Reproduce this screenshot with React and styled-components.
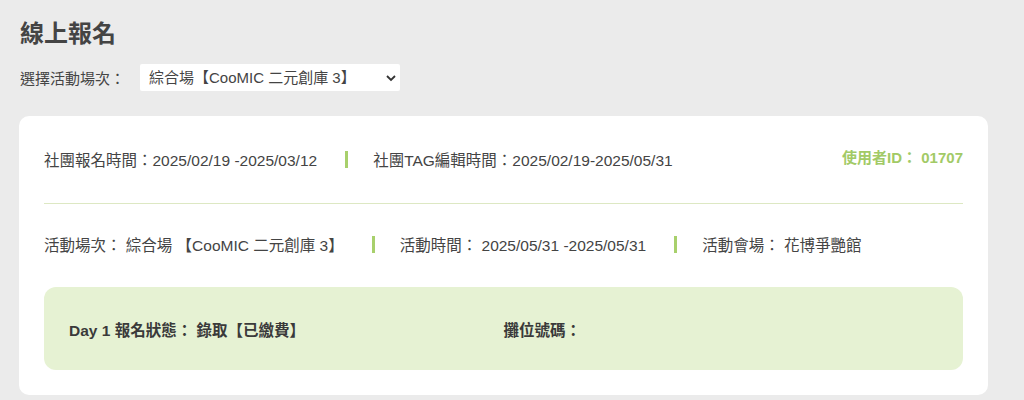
import styled, { createGlobalStyle } from "styled-components";

const GlobalStyle = createGlobalStyle`
  body {
    margin: 0;
    background: #ebebeb;
    font-family: "Liberation Sans", "Noto Sans CJK TC", sans-serif;
    color: #444;
  }
`;

const Page = styled.div`
  padding: 18px 36px 0 19px;
`;

const Title = styled.h1`
  margin: 0 0 0 1px;
  font-size: 24px;
  font-weight: 700;
  line-height: 32px;
  color: #444;
`;

const SelectRow = styled.div`
  display: flex;
  align-items: center;
  margin: 14px 0 0 1px;
  font-size: 15px;
  color: #444;
`;

const SelectLabel = styled.span`
  width: 120px;
`;

const SelectBox = styled.div`
  position: relative;
  width: 260px;
  height: 27px;
`;

const Select = styled.select`
  appearance: none;
  width: 100%;
  height: 100%;
  border: none;
  border-radius: 2px;
  background: #fff;
  padding: 0 0 0 9px;
  font-family: inherit;
  font-size: 15px;
  color: #444;
  outline: none;
`;

const Chevron = styled.svg`
  position: absolute;
  right: 3px;
  top: 10px;
  pointer-events: none;
`;

const Card = styled.section`
  margin-top: 25px;
  background: #fff;
  border-radius: 10px;
  padding: 25px;
`;

const InfoRow = styled.div`
  display: flex;
  align-items: center;
  height: 36px;
  font-size: 15.5px;
  margin-top: ${(p) => p.$top || 0}px;
`;

const Item = styled.span`
  white-space: pre;
  color: #444;
`;

const Sep = styled.span`
  flex: none;
  width: 3px;
  height: 17px;
  background: #a8d06c;
  margin: 0 25px 0 28px;
`;

const UserId = styled.span`
  margin-left: auto;
  font-size: 15px;
  font-weight: 700;
  color: #a2ca66;
  position: relative;
  top: -3px;
`;

const Divider = styled.hr`
  border: none;
  height: 1px;
  background: #dde8c3;
  margin: 26px 0 0;
`;

const StatusBox = styled.div`
  margin-top: 25px;
  height: 83px;
  background: #e6f2d3;
  border-radius: 12px;
  padding: 0 25px;
  display: grid;
  grid-template-columns: 1fr 1fr;
  align-items: center;
  font-size: 15.5px;
  font-weight: 700;
  color: #3a3a3a;
`;

export default function App() {
  return (
    <Page>
      <GlobalStyle />
      <Title>線上報名</Title>
      <SelectRow>
        <SelectLabel>選擇活動場次：</SelectLabel>
        <SelectBox>
          <Select defaultValue="1">
            <option value="1">綜合場【CooMIC 二元創庫 3】</option>
          </Select>
          <Chevron width="12" height="8" viewBox="0 0 12 8">
            <path d="M2 2l4 4 4-4" fill="none" stroke="#333" strokeWidth="1.8" />
          </Chevron>
        </SelectBox>
      </SelectRow>
      <Card>
        <InfoRow>
          <Item>社團報名時間：2025/02/19 -2025/03/12</Item>
          <Sep />
          <Item>社團TAG編輯時間：2025/02/19-2025/05/31</Item>
          <UserId>使用者ID： 01707</UserId>
        </InfoRow>
        <Divider />
        <InfoRow $top={22}>
          <Item>活動場次： 綜合場 【CooMIC 二元創庫 3】</Item>
          <Sep />
          <Item>活動時間： 2025/05/31 -2025/05/31</Item>
          <Sep />
          <Item>活動會場： 花博爭艷館</Item>
        </InfoRow>
        <StatusBox>
          <span>Day 1 報名狀態： 錄取【已繳費】</span>
          <span>攤位號碼：</span>
        </StatusBox>
      </Card>
    </Page>
  );
}
